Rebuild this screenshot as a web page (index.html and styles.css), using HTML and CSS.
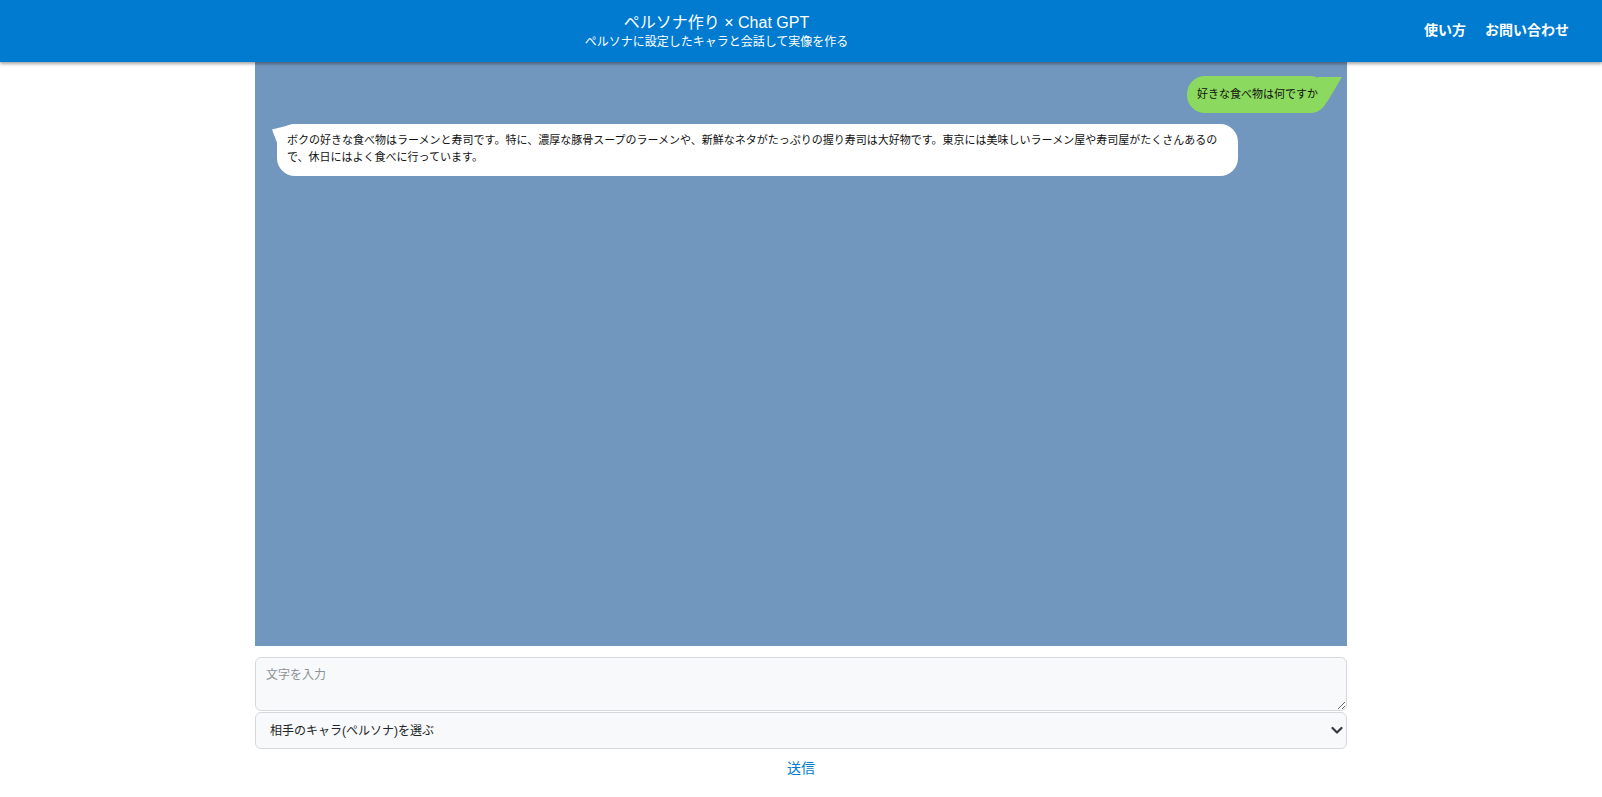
FILE: index.html
```html
<!DOCTYPE html>
<html lang="ja">
<head>
<meta charset="utf-8">
<title>ペルソナ作り × Chat GPT</title>
<link rel="stylesheet" href="styles.css">
</head>
<body>
<header class="site-header">
  <div class="brand">
    <div class="brand-title">ペルソナ作り × Chat GPT</div>
    <div class="brand-sub">ペルソナに設定したキャラと会話して実像を作る</div>
  </div>
  <nav class="nav">
    <a class="nav-link" href="#">使い方</a>
    <a class="nav-link" href="#">お問い合わせ</a>
  </nav>
</header>
<main class="container">
  <section class="chat">
    <div class="bubble bubble-me">好きな食べ物は何ですか</div>
    <div class="bubble bubble-ai">ボクの好きな食べ物はラーメンと寿司です。特に、濃厚な豚骨スープのラーメンや、新鮮なネタがたっぷりの握り寿司は大好物です。東京には美味しいラーメン屋や寿司屋がたくさんあるので、休日にはよく食べに行っています。</div>
  </section>
  <form class="composer">
    <textarea class="input" placeholder="文字を入力"></textarea>
    <div class="select-wrap">
      <select class="select">
        <option>相手のキャラ(ペルソナ)を選ぶ</option>
      </select>
      <svg class="chevron" width="12" height="9" viewBox="0 0 12 9"><path d="M1.5 2 L6 6.5 L10.5 2" fill="none" stroke="#343a40" stroke-width="2.2" stroke-linecap="round" stroke-linejoin="round"/></svg>
    </div>
    <button class="send" type="button">送信</button>
  </form>
</main>
</body>
</html>
```

FILE: styles.css
```css
* { box-sizing: border-box; }
html, body { margin: 0; padding: 0; }
body {
  font-family: "Liberation Sans", "Noto Sans CJK JP", sans-serif;
  background: #ffffff;
  color: #212529;
}
.site-header {
  position: relative;
  z-index: 2;
  height: 62px;
  background: #007bd0;
  color: #ffffff;
  display: flex;
  align-items: center;
  box-shadow: 0 2px 3px rgba(0, 0, 0, 0.35);
}
.brand {
  flex: 1;
  padding-left: 9px;
  text-align: center;
  padding-top: 1px;
}
.brand-title {
  font-size: 16px;
  line-height: 20px;
}
.brand-sub {
  font-size: 12px;
  line-height: 16px;
  margin-top: 1px;
}
.nav {
  display: flex;
  gap: 19px;
  padding-right: 33px;
  padding-bottom: 4px;
}
.nav-link {
  color: #ffffff;
  text-decoration: none;
  font-size: 14px;
  font-weight: 600;
}
.container {
  width: 1092px;
  margin: 0 auto;
}
.chat {
  height: 584px;
  background: #7297bf;
  display: flex;
  flex-direction: column;
  gap: 11px;
  padding: 14px 19px 0 22px;
}
.bubble {
  position: relative;
  z-index: 0;
  font-size: 11px;
  color: #111111;
  max-width: 961px;
}
.bubble::before {
  content: "";
  position: absolute;
  z-index: -1;
}
.bubble-me {
  align-self: flex-end;
  background: #8bd95e;
  padding: 10px 10px;
  line-height: 17px;
  border-radius: 18px;
}
.bubble-me::before {
  right: -14px;
  top: 1px;
  width: 24px;
  height: 25px;
  background: #8bd95e;
  clip-path: polygon(0 0, 100% 0, 38% 100%, 0 100%);
}
.bubble-ai {
  align-self: flex-start;
  background: #ffffff;
  padding: 8px 10px 11px;
  line-height: 16.5px;
  border-radius: 18px;
}
.bubble-ai::before {
  left: -5px;
  top: 0;
  width: 22px;
  height: 20px;
  background: #ffffff;
  clip-path: polygon(0 28%, 100% 0, 100% 100%, 25% 100%);
}
.composer {
  display: flex;
  flex-direction: column;
  padding-top: 11px;
}
.input {
  display: block;
  width: 100%;
  height: 54px;
  border: 1px solid #d5d8dc;
  border-radius: 6px;
  background: #f8f9fa;
  padding: 9px 10px;
  font-family: inherit;
  font-size: 12px;
  line-height: 17px;
  color: #212529;
}
.input::placeholder { color: #8c9298; }
.select-wrap {
  position: relative;
  margin-top: 1px;
}
.select {
  display: block;
  width: 100%;
  height: 37px;
  -webkit-appearance: none;
  appearance: none;
  border: 1px solid #d5d8dc;
  border-radius: 6px;
  background: #f8f9fa;
  padding: 0 30px 0 14px;
  font-family: inherit;
  font-size: 12px;
  color: #212529;
}
.chevron {
  position: absolute;
  right: 4px;
  top: 14px;
  pointer-events: none;
}
.send {
  align-self: center;
  background: none;
  border: none;
  color: #007bd0;
  font-family: inherit;
  font-size: 14px;
  line-height: 18px;
  padding: 10px 12px;
  cursor: pointer;
}
```
